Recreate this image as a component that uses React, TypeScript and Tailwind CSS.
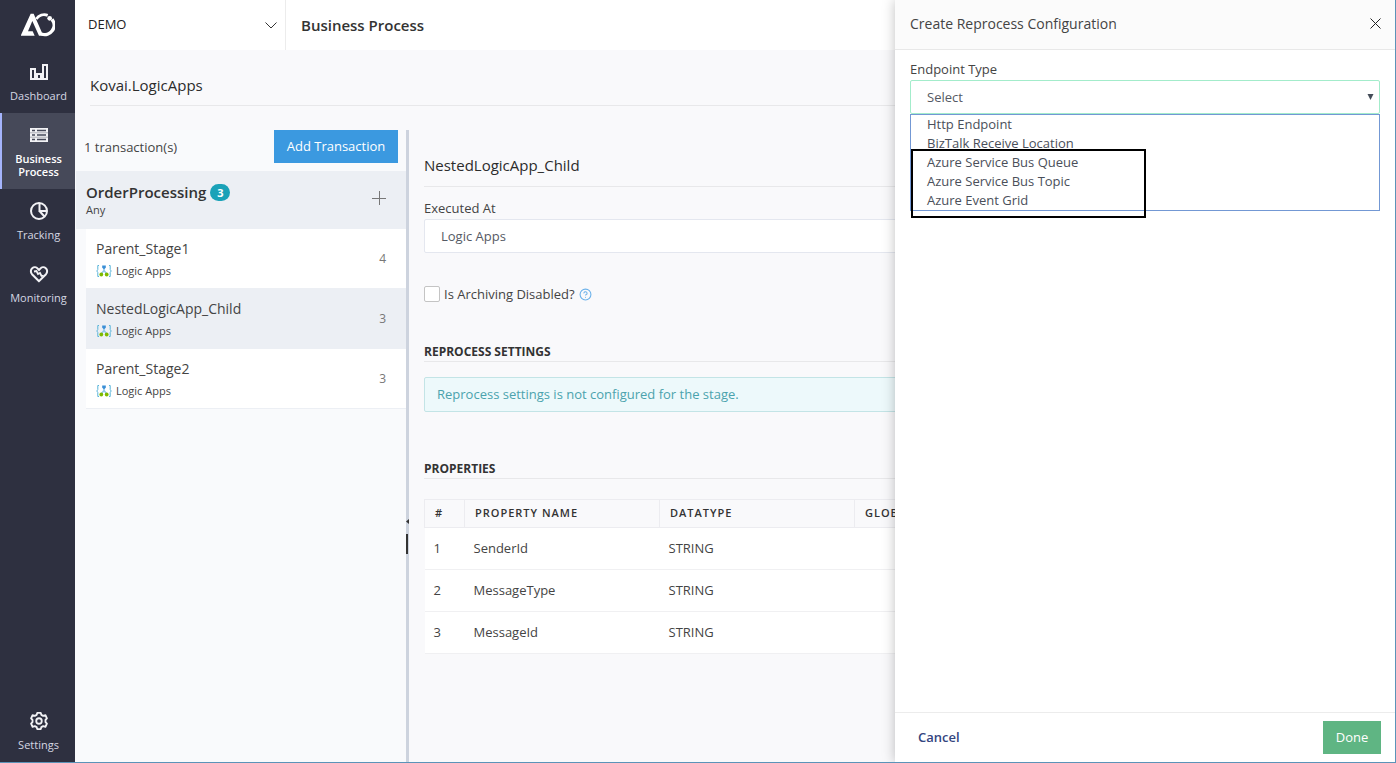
import { useState } from 'react'
import type { ReactNode } from 'react'
import { CircleHelp } from 'lucide-react'

const stages = [
  { name: 'Parent_Stage1', type: 'Logic Apps', count: 4 },
  { name: 'NestedLogicApp_Child', type: 'Logic Apps', count: 3 },
  { name: 'Parent_Stage2', type: 'Logic Apps', count: 3 },
]

const properties = [
  { name: 'SenderId', datatype: 'STRING' },
  { name: 'MessageType', datatype: 'STRING' },
  { name: 'MessageId', datatype: 'STRING' },
]

const endpointTypes = [
  'Http Endpoint',
  'BizTalk Receive Location',
  'Azure Service Bus Queue',
  'Azure Service Bus Topic',
  'Azure Event Grid',
]

function Logo() {
  return (
    <svg viewBox="63 38 102 72" className="w-[34px] h-6" aria-label="Atomic Scope">
      <path d="M62 106 L92 40 L101 40 L130 106 L117 106 L97 62 L84 93 L98 93 L104 106 Z" fill="#fff" />
      <path d="M109 56 A29 29 0 0 1 143 45" fill="none" stroke="#fff" strokeWidth="9" />
      <path d="M156 57 A28 28 0 0 1 125 101" fill="none" stroke="#fff" strokeWidth="10" />
      <circle cx="149" cy="54" r="7" fill="#fff" />
    </svg>
  )
}

function DashboardIcon() {
  return (
    <svg viewBox="0 0 20 20" className="size-5" fill="none" stroke="#f2f2f5" strokeWidth="2">
      <path d="M2 7h4v10H2zM8 12h4v5H8zM14 3h4v14h-4z" />
    </svg>
  )
}

function ProcessIcon() {
  return (
    <svg viewBox="0 0 20 20" className="size-5">
      <path d="M1 3h18v14H1z" fill="#f2f2f5" />
      <path d="M8 5.500h9M8 10h9M8 14.500h9M3 5.500h3M3 10h3M3 14.500h3" stroke="#464959" strokeWidth="1.300" />
      <path d="M1 7.800h18M1 12.200h18" stroke="#464959" strokeWidth="0.400" />
    </svg>
  )
}

function TrackingIcon() {
  return (
    <svg viewBox="0 0 20 20" className="size-5" fill="none" stroke="#f2f2f5" strokeWidth="2">
      <circle cx="10" cy="10" r="8" />
      <path d="M10.500 2v8H18M10.500 10l5 5.500" />
    </svg>
  )
}

function MonitoringIcon() {
  return (
    <svg viewBox="0 0 20 20" className="size-5" fill="none" stroke="#f2f2f5" strokeWidth="2">
      <path d="M10 17.200 3 10.200C1.400 8.400 1.500 5.600 3.200 4.200c1.700-1.400 4.200-1.100 5.500.4L10 6l1.300-1.400c1.300-1.500 3.800-1.800 5.500-.4 1.700 1.400 1.800 4.200.2 6z" />
      <path d="M5 7.500l2.500-.5 1.500 3 2-1 1.500 3 2-.5" strokeWidth="1.800" />
    </svg>
  )
}

function SettingsIcon() {
  return (
    <svg viewBox="-13 -13 26 26" className="size-5" fill="none" stroke="#f2f2f5" strokeWidth="2.400" strokeLinejoin="round">
      <path d="M-3-8L-2.300-10.500H2.300L3-8L5.430-6.600L8.380-7.490L10.300-3.510L8.430-1.400V1.400L10.300 3.510L8.380 7.490L5.430 6.600L3 8L2.300 10.500H-2.300L-3 8L-5.430 6.600L-8.380 7.490L-10.300 3.510L-8.430 1.400V-1.400L-10.300-3.510L-8.380-7.490L-5.430-6.600Z" />
      <circle r="3.600" />
    </svg>
  )
}

function LogicAppIcon() {
  return (
    <svg viewBox="0 0 16 14" className="w-4 h-3.5" fill="none">
      <path d="M3 1.500H1.800V5.500L.8 7l1 1.500v4H3M13 1.500h1.200v4l1 1.500-1 1.500v4H13" stroke="#59b4d9" />
      <path d="M8 4v2.500L5.200 10M8 6.500l2.800 3.500" stroke="#8fc6ea" strokeWidth="1.500" />
      <path d="M6.200 1.500h3.600v2.300L8 5.200 6.200 3.800z" fill="#3a8fd6" />
      <circle cx="5.300" cy="10.500" r="1.900" fill="#7fba00" />
      <circle cx="10.700" cy="10.500" r="1.900" fill="#7fba00" />
    </svg>
  )
}

function NavItem({ icon, label, active = false }: { icon: ReactNode; label: string; active?: boolean }) {
  return (
    <a
      href="#"
      className={`flex flex-col items-center gap-[7px] pt-3 pb-[11px] pl-2.5 pr-2 text-[11px] leading-[13px] text-center ${
        active ? 'bg-[#464959] text-white font-semibold shadow-[inset_2px_0_0_#a5b4fc]' : 'text-[#d5d7e3]'
      }`}
    >
      {icon}
      <span>{label}</span>
    </a>
  )
}

export default function App() {
  const [selected, setSelected] = useState('NestedLogicApp_Child')
  const [endpoint, setEndpoint] = useState('')

  return (
    <div className="relative flex h-screen overflow-hidden border-r border-b border-[#5b93b8] bg-[#f9f9fb] font-['Open_Sans',sans-serif] text-[13px] text-[#444]">
      {/* Sidebar */}
      <nav className="flex w-[75px] shrink-0 flex-col bg-[#2e3040]">
        <div className="flex h-[50px] items-center justify-center">
          <Logo />
        </div>
        <NavItem icon={<DashboardIcon />} label="Dashboard" />
        <NavItem icon={<ProcessIcon />} label="Business Process" active />
        <NavItem icon={<TrackingIcon />} label="Tracking" />
        <NavItem icon={<MonitoringIcon />} label="Monitoring" />
        <div className="mt-auto">
          <NavItem icon={<SettingsIcon />} label="Settings" />
        </div>
      </nav>

      <div className="flex min-w-0 flex-1 flex-col">
        {/* Top bar */}
        <header className="flex h-[50px] shrink-0 items-center bg-white">
          <button className="flex h-full w-[211px] items-center justify-between border-r border-[#ececec] pl-[13px] pr-2 text-[#222]">
            DEMO
            <svg viewBox="0 0 12 7" className="w-3 h-[7px]" fill="none" stroke="#333">
              <path d="M.5.5 6 6 11.500.5" />
            </svg>
          </button>
          <h1 className="pl-[15px] text-[15px] font-semibold text-[#333]">Business Process</h1>
        </header>

        <div className="ml-[15px] mr-4 flex h-14 shrink-0 items-center border-b border-[#e8e8ea] pt-4 text-[15px] text-[#2c2c2c]">
          Kovai.LogicApps
        </div>

        <div className="mt-6 flex min-h-0 flex-1">
          {/* Transactions */}
          <section className="w-[331px] shrink-0 bg-[#f9fafc] pl-px">
            <div className="flex h-[41px] items-start justify-between px-2">
              <span className="leading-[34px]">1 transaction(s)</span>
              <button className="h-[33px] w-[124px] bg-[#3b99e0] font-medium text-white">Add Transaction</button>
            </div>
            <div className="flex h-[58px] items-center justify-between bg-[#eceff4] pl-2.5 pr-5">
              <div>
                <div className="flex items-center gap-1 text-[15px] leading-5 font-semibold text-[#333]">
                  OrderProcessing
                  <span className="w-5 rounded-full bg-[#1aa2b8] text-center text-[11px] leading-[17px] font-bold text-white">3</span>
                </div>
                <div className="text-[11px] leading-4">Any</div>
              </div>
              <button aria-label="Add stage" className="pb-1">
                <svg viewBox="0 0 14 14" className="size-3.5" stroke="#777">
                  <path d="M0 7.500h14M7.500 0v14" />
                </svg>
              </button>
            </div>
            <ul className="ml-2.5">
              {stages.map((stage) => (
                <li key={stage.name}>
                  <button
                    onClick={() => setSelected(stage.name)}
                    className={`flex h-[60px] w-full items-center justify-between border-b border-[#eceff4] pl-2.5 pr-5 text-left ${
                      selected === stage.name ? 'bg-[#eceff4]' : 'bg-white'
                    }`}
                  >
                    <span>
                      <span className="block text-sm leading-6">{stage.name}</span>
                      <span className="flex items-center gap-1 text-[11px] leading-5">
                        <LogicAppIcon />
                        {stage.type}
                      </span>
                    </span>
                    <span className="text-xs text-[#777]">{stage.count}</span>
                  </button>
                </li>
              ))}
            </ul>
          </section>

          {/* Splitter */}
          <div className="relative w-[3px] shrink-0 bg-[#cdd3de]">
            <svg viewBox="0 0 3 5" className="absolute left-0 top-[389px] w-[3px] h-[5px]" fill="#333">
              <path d="M3 0v5L0 2.500z" />
            </svg>
            <div className="absolute left-0 top-[404px] h-5 w-0.5 bg-[#333]" />
          </div>

          {/* Stage details */}
          <main className="min-w-0 flex-1 pl-[15px] pr-4">
            <h2 className="flex h-[57px] items-center border-b border-[#e8e8ea] pt-3.5 text-[15px] text-[#2c2c2c]">NestedLogicApp_Child</h2>
            <label htmlFor="executed-at" className="mt-3 mb-0.5 block leading-[18px]">Executed At</label>
            <input
              id="executed-at"
              readOnly
              value="Logic Apps"
              className="block h-[34px] w-full rounded-xs border border-[#e4e7ef] bg-white px-4 text-[#555a64]"
            />
            <div className="mt-8 flex h-[18px] items-center">
              <input
                id="archiving"
                type="checkbox"
                className="mr-1 size-4 appearance-none rounded-xs border border-[#c4c4c4] bg-white checked:bg-[#3b99e0]"
              />
              <label htmlFor="archiving" className="pt-0.5">Is Archiving Disabled?</label>
              <CircleHelp size={13} strokeWidth={2} className="ml-1 text-[#6cb2ea]" />
            </div>

            <h3 className="mt-[38px] border-b border-[#e8e8ea] pt-0.5 text-xs leading-[18px] font-bold text-[#333]">REPROCESS SETTINGS</h3>
            <div className="mt-[15px] h-[35px] rounded-xs border border-[#c3e4e6] bg-[#edf9fb] px-3 leading-[33px] text-[#4ba3ad]">
              Reprocess settings is not configured for the stage.
            </div>

            <h3 className="mt-[46px] border-b border-[#e8e8ea] pt-0.5 text-xs leading-[18px] font-bold text-[#333]">PROPERTIES</h3>
            <table className="mt-5 w-full table-fixed border-collapse text-left">
              <colgroup>
                <col className="w-10" />
                <col className="w-[195px]" />
                <col className="w-[195px]" />
                <col />
              </colgroup>
              <thead>
                <tr className="h-7 text-[11px] tracking-[1px] text-[#333]">
                  <th className="border border-[#ececf0] px-2.5 font-semibold">#</th>
                  <th className="border border-[#ececf0] px-2.5 font-semibold">PROPERTY NAME</th>
                  <th className="border border-[#ececf0] px-2.5 font-semibold">DATATYPE</th>
                  <th className="border border-[#ececf0] px-2.5 font-semibold">GLOBAL</th>
                </tr>
              </thead>
              <tbody>
                {properties.map((property, i) => (
                  <tr key={property.name} className="h-[42px] border-b border-[#f0f0f2] bg-white">
                    <td className="px-[9px]">{i + 1}</td>
                    <td className="px-[9px]">{property.name}</td>
                    <td className="px-[9px]">{property.datatype}</td>
                    <td />
                  </tr>
                ))}
              </tbody>
            </table>
          </main>
        </div>
      </div>

      {/* Drawer */}
      <aside className="absolute inset-y-0 right-0 flex w-[500px] flex-col bg-white shadow-[0_0_12px_rgba(0,0,0,0.25)]">
        <div className="flex h-[50px] shrink-0 items-center justify-between border-b border-[#e8e8e8] bg-[#fbfbfb] pl-[15px] pr-3.5 pb-0.5">
          <h2 className="text-sm">Create Reprocess Configuration</h2>
          <button aria-label="Close">
            <svg viewBox="0 0 11 11" className="size-[11px]" stroke="#222">
              <path d="M.5.5l10 10M10.500.5l-10 10" />
            </svg>
          </button>
        </div>

        <div className="flex-1 px-[15px] pt-2.5">
          <label htmlFor="endpoint" className="mb-0.5 block leading-[18px]">Endpoint Type</label>
          <div className="relative">
            <select
              id="endpoint"
              value={endpoint}
              onChange={(e) => setEndpoint(e.target.value)}
              className="block h-[34px] w-full appearance-none rounded-xs border border-[#a3eccb] bg-white px-4 pt-0.5 text-[#555a64]"
            >
              <option value="">Select</option>
              {endpointTypes.map((type) => (
                <option key={type}>{type}</option>
              ))}
            </select>
            <svg viewBox="0 0 7 6" className="pointer-events-none absolute right-1.5 top-3.5 w-[7px] h-1.5" fill="#444c58">
              <path d="M.5 0h6L3.500 6z" />
            </svg>
            <ul role="listbox" aria-label="Endpoint Type" className="absolute inset-x-0 top-[34px] border border-[#7398d4] bg-white leading-[19px] text-[#4a4f5a]">
              {endpointTypes.map((type) => (
                <li key={type} role="option" aria-selected={endpoint === type} onClick={() => setEndpoint(type)} className="px-4">
                  {type}
                </li>
              ))}
            </ul>
            {/* Highlight around the Azure endpoints */}
            <div className="pointer-events-none absolute left-px top-[69px] h-[69px] w-[235px] border-2 border-black" />
          </div>
        </div>

        <div className="flex h-[50px] shrink-0 items-center justify-between border-t border-[#ececec] pl-[23px] pr-3.5">
          <button className="font-semibold text-[#34457f]">Cancel</button>
          <button className="h-[33px] w-[58px] bg-[#5fb583] font-medium text-white">Done</button>
        </div>
      </aside>
    </div>
  )
}
